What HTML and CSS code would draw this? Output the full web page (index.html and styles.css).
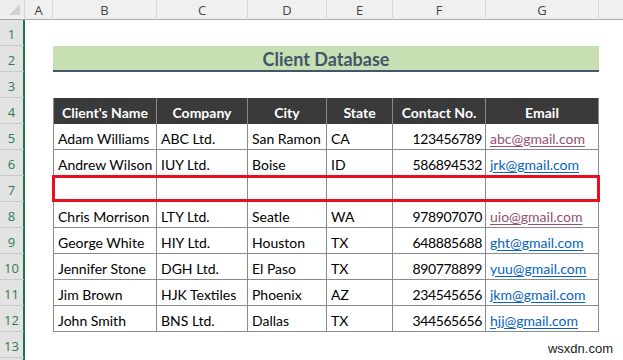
FILE: index.html
```html
<!DOCTYPE html>
<html>
<head>
<meta charset="utf-8">
<link rel="stylesheet" href="styles.css">
</head>
<body>
<div class="sheet">
  <div class="corner"><span class="tri"></span></div>
  <div class="ch">A</div><div class="ch">B</div><div class="ch">C</div><div class="ch">D</div><div class="ch">E</div><div class="ch">F</div><div class="ch">G</div><div class="ch last"></div>

  <div class="rh">1</div><div class="blank span8"></div>

  <div class="rh">2</div><div class="blank"></div><div class="title">Client Database</div><div class="blank"></div>

  <div class="rh">3</div><div class="blank span8"></div>

  <div class="rh">4</div><div class="blank"></div>
  <div class="th first">Client's Name</div><div class="th">Company</div><div class="th">City</div><div class="th">State</div><div class="th">Contact No.</div><div class="th">Email</div><div class="blank"></div>

  <div class="rh">5</div><div class="blank"></div>
  <div class="td first">Adam Williams</div><div class="td">ABC Ltd.</div><div class="td">San Ramon</div><div class="td">CA</div><div class="td num">123456789</div><div class="td"><span class="link visited">abc@gmail.com</span></div><div class="blank"></div>

  <div class="rh">6</div><div class="blank"></div>
  <div class="td first">Andrew Wilson</div><div class="td">IUY Ltd.</div><div class="td">Boise</div><div class="td">ID</div><div class="td num">586894532</div><div class="td"><span class="link">jrk@gmail.com</span></div><div class="blank"></div>

  <div class="rh">7</div><div class="blank"></div>
  <div class="td first"></div><div class="td"></div><div class="td"></div><div class="td"></div><div class="td num"></div><div class="td"></div><div class="blank"></div>

  <div class="rh">8</div><div class="blank"></div>
  <div class="td first">Chris Morrison</div><div class="td">LTY Ltd.</div><div class="td">Seatle</div><div class="td">WA</div><div class="td num">978907070</div><div class="td"><span class="link visited">uio@gmail.com</span></div><div class="blank"></div>

  <div class="rh">9</div><div class="blank"></div>
  <div class="td first">George White</div><div class="td">HIY Ltd.</div><div class="td">Houston</div><div class="td">TX</div><div class="td num">648885688</div><div class="td"><span class="link">ght@gmail.com</span></div><div class="blank"></div>

  <div class="rh">10</div><div class="blank"></div>
  <div class="td first">Jennifer Stone</div><div class="td">DGH Ltd.</div><div class="td">El Paso</div><div class="td">TX</div><div class="td num">890778899</div><div class="td"><span class="link">yuu@gmail.com</span></div><div class="blank"></div>

  <div class="rh">11</div><div class="blank"></div>
  <div class="td first">Jim Brown</div><div class="td">HJK Textiles</div><div class="td">Phoenix</div><div class="td">AZ</div><div class="td num">234545656</div><div class="td"><span class="link">jkm@gmail.com</span></div><div class="blank"></div>

  <div class="rh">12</div><div class="blank"></div>
  <div class="td first">John Smith</div><div class="td">BNS Ltd.</div><div class="td">Dallas</div><div class="td">TX</div><div class="td num">344565656</div><div class="td"><span class="link">hjj@gmail.com</span></div><div class="blank"></div>

  <div class="rh">13</div><div class="blank span7"></div><div class="blank mark"><span class="wm">wsxdn.com</span></div>

  <div class="rh rest"></div><div class="blank span8 rest"></div>

  <div class="redbox"></div>
</div>
</body>
</html>
```

FILE: styles.css
```css
html, body {
  margin: 0;
  padding: 0;
  background: #ffffff;
}

.sheet {
  position: relative;
  display: grid;
  grid-template-columns: 25px 28px 104px 91px 79px 66px 93px 113px 24px;
  grid-template-rows: 20px repeat(13, 26px) 2px;
  width: 623px;
  height: 360px;
  overflow: hidden;
  font-family: Lato, "Liberation Sans", sans-serif;
  font-size: 14px;
  color: #000;
}

.corner {
  background: #eeeeee;
  border-bottom: 1px solid #ababab;
  border-right: 1px solid #d4d4d4;
  position: relative;
}
.tri {
  position: absolute;
  right: 4px;
  bottom: 4px;
  width: 0;
  height: 0;
  border-left: 11px solid transparent;
  border-bottom: 11px solid #d2d2d2;
}

.ch {
  background: #f0f0f0;
  border-bottom: 1px solid #ababab;
  border-right: 1px solid #d9d9d9;
  display: flex;
  align-items: center;
  justify-content: center;
  font-family: "Open Sans", "Liberation Sans", sans-serif;
  font-size: 13px;
  color: #454545;
  padding-top: 1px;
  box-sizing: border-box;
}
.ch.last { border-right: none; }

.rh {
  background: #e3e3e3;
  border-right: 2px solid #217346;
  border-bottom: 1px solid #c9c9c9;
  display: flex;
  align-items: center;
  justify-content: center;
  font-family: "Open Sans", "Liberation Sans", sans-serif;
  font-size: 13px;
  color: #2f7b4f;
  padding-top: 2px;
  box-sizing: border-box;
}

.blank { background: #fff; }
.span8 { grid-column: span 8; }
.span7 { grid-column: span 7; }

.title {
  grid-column: span 6;
  background: #c6e0b4;
  border-bottom: 2px solid #44546a;
  color: #44546a;
  font-weight: 700;
  font-size: 18px;
  display: flex;
  align-items: center;
  justify-content: center;
  padding-top: 1px;
  box-sizing: border-box;
}

.th {
  background: #3a3a3a;
  color: #ffffff;
  font-weight: 700;
  font-size: 14px;
  display: flex;
  align-items: center;
  justify-content: center;
  border-right: 1px solid #8a8a8a;
  padding-top: 2px;
  box-sizing: border-box;
}
.th.first { border-left: 1px solid #8a8a8a; }

.td {
  border-right: 1px solid #8a8a8a;
  border-bottom: 1px solid #8a8a8a;
  display: flex;
  align-items: center;
  padding: 3px 3px 0 4px;
  box-sizing: border-box;
  white-space: nowrap;
  overflow: hidden;
}
.td.first { border-left: 1px solid #8a8a8a; }
.td.num { justify-content: flex-end; letter-spacing: -0.4px; }

.link {
  color: #0563c1;
  text-decoration: underline;
  text-underline-offset: 2px;
}
.link.visited { color: #954f72; }

.mark { position: relative; }
.wm {
  position: absolute;
  right: 10px;
  bottom: 2px;
  font-family: "Liberation Sans", Arial, sans-serif;
  font-size: 13px;
  color: #1a1a1a;
  background: #fff;
  white-space: nowrap;
}

.rest { background: #fff; }
.rh.rest { background: #e3e3e3; }

.redbox {
  position: absolute;
  grid-column: 3 / 9;
  grid-row: 8 / 9;
  top: -1px;
  left: -1px;
  right: -1px;
  bottom: 0;
  border: 3px solid #e8101c;
  z-index: 2;
}
```
